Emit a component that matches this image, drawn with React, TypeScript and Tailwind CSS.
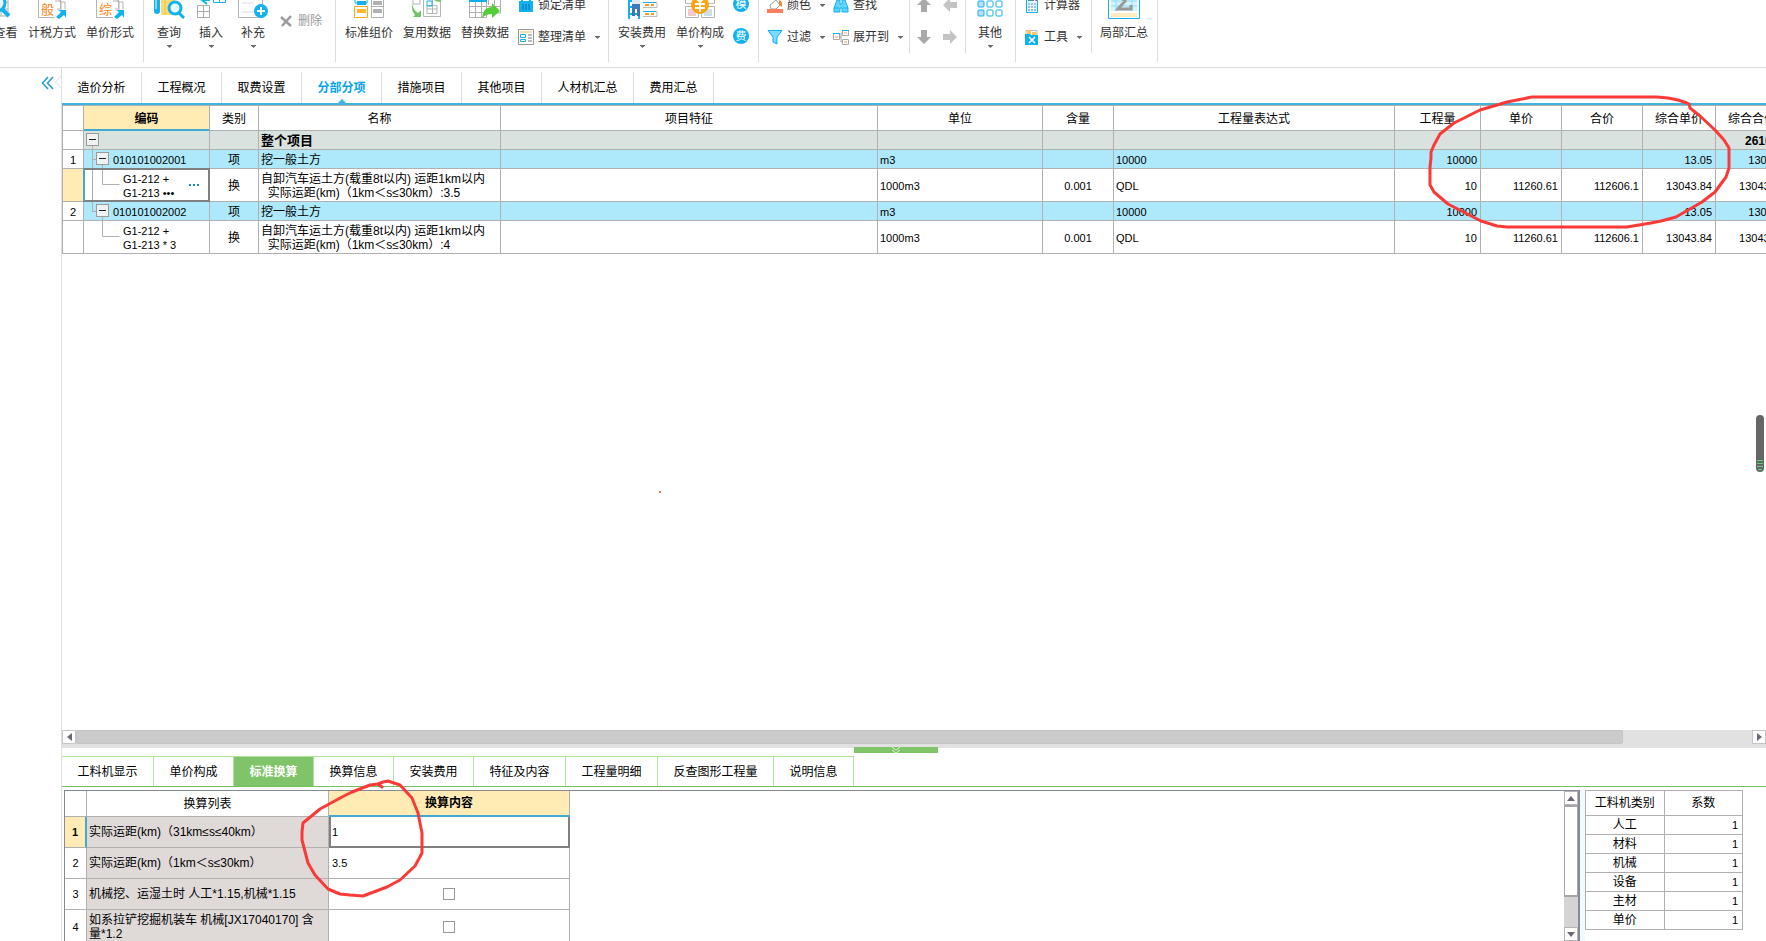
import type { ReactNode } from "react";

const BLUE = "#12b1ef";

function Caret() {
  return (
    <svg width="5" height="3" viewBox="0 0 5 3" className="shrink-0" aria-hidden="true">
      <path d="M0 0h5v.500L2.500 3 0 .500z" fill="#666a73" />
    </svg>
  );
}

function Big({ label, icon, caret, width = "w-[58px]" }: { label: string; icon: ReactNode; caret?: boolean; width?: string }) {
  return (
    <button type="button" className={`flex shrink-0 flex-col items-center whitespace-nowrap ${width}`}>
      <span className="-mt-[13px] block h-8 w-8">
        <svg width="32" height="32" viewBox="0 0 32 32" fill="none" aria-hidden="true">
          {icon}
        </svg>
      </span>
      <span className="mt-1 block h-5 leading-5">{label}</span>
      {caret && (
        <span className="mt-0.5 flex">
          <Caret />
        </span>
      )}
    </button>
  );
}

function Small({ label, icon, caret }: { label: string; icon: ReactNode; caret?: boolean }) {
  return (
    <button type="button" className="flex h-5 items-center gap-1 whitespace-nowrap leading-5">
      <svg width="16" height="16" viewBox="0 0 16 16" fill="none" className="shrink-0" aria-hidden="true">
        {icon}
      </svg>
      <span>{label}</span>
      {caret && (
        <span className="ml-[5px]">
          <Caret />
        </span>
      )}
    </button>
  );
}

const sheet = (ch: string) => (
  <>
    <path d="M2.500 6V30.500H19M2 6H24.500V22" stroke="#b5b5b5" />
    <path d="M19 14h6v10M24 9v6h5V22M21 22h3" stroke="#b5b5b5" />
    <text x="5" y="27" fontSize="13" fill="#ff7f0e">{ch}</text>
    <path d="M20 30l5-5-3-2h8v8l-2-3-5 4z" fill={BLUE} />
  </>
);

const icons = {
  view: (
    <>
      <path d="M4 8h14v21H4M4 15h14M4 22h14M11 8v21" stroke="#b0b0b0" />
      <circle cx="7" cy="16" r="8" fill="#e9f9ff" stroke={BLUE} strokeWidth="3" />
      <path d="M12 22l7 7" stroke={BLUE} strokeWidth="4" />
    </>
  ),
  query: (
    <>
      <path d="M1 4h6v20q0 3-3 3t-3-3z" fill={BLUE} />
      <path d="M3 6v16" stroke="#fff" />
      <path d="M8 5h14v23H8z" fill="#ffdb73" />
      <path d="M12 5v23" stroke="#f5be38" />
      <circle cx="22" cy="21" r="6" fill="#e9f9ff" stroke={BLUE} strokeWidth="3" />
      <path d="M26 26l5 5" stroke={BLUE} strokeWidth="3" />
    </>
  ),
  insert: (
    <>
      <path d="M2.500 18.500h12v12h-12zM2.500 24.500h12M8.500 18.500v12" stroke="#aaa" />
      <path d="M18.500 4.500h12v11h-12zM18.500 10.500h12M24.500 4.500v11" stroke={BLUE} />
      <path d="M15 13H8m4-4-5 4 5 4" stroke={BLUE} strokeWidth="2" />
    </>
  ),
  supplement: (
    <>
      <path d="M1.500 5.500h24v25h-24z" stroke="#b5b5b5" />
      <path d="M5 16h12M5 25h12" stroke="#ddd" />
      <circle cx="24" cy="24" r="7" fill={BLUE} />
      <path d="M20 24h8M24 20v8" stroke="#fff" strokeWidth="2" />
    </>
  ),
  compose: (
    <>
      <path d="M2 6h12v10H2z" stroke={BLUE} />
      <path d="M4 14h9v4H4z" fill={BLUE} />
      <path d="M1.500 19.500h13v11h-13z" stroke="#ffa91f" />
      <path d="M4 22h9v4H4z" fill="#ffb92e" />
      <path d="M18.500 6.500h12v24h-12zM18 19.500h13" stroke="#b0b0b0" />
      <path d="M20 14h9v4h-9zM20 22h9v4h-9z" fill="#b0b0b0" />
    </>
  ),
  reuse: (
    <>
      <path d="M12.500 12.500h17v17h-17zM16 18.500h10v8H16zM21.500 13v13M16 22h10" stroke="#b5b5b5" />
      <path d="M2 10h7v7H2zM16 8h14v6" stroke="#b5b5b5" />
      <path d="M16 14h5v5h-5z" stroke={BLUE} />
      <path d="M1 16q1 7 6 10l3-3v7H2l2-2q-4-5-3-12z" fill="#72c268" />
      <path d="M23 14l6-3 1 4z" fill="#72c268" />
    </>
  ),
  replace: (
    <>
      <path d="M.500 8.500h17v22H.500zM.500 19.500h31M.500 25.500h14M6.500 14v16M12.500 14v16M19.500 8v10M25.500 8v10M31.500 8v18h-6" stroke="#b0b0b0" />
      <path d="M0 14h18" stroke={BLUE} strokeWidth="2" />
      <path d="M13 31q1-11 10-11v-4l8 8-8 7v-4q-6 0-10 4z" fill="#54ce38" />
    </>
  ),
  install: (
    <>
      <path d="M3 6v26M13 6v26M3 14h10M3 20h10M3 27h10" stroke={BLUE} strokeWidth="2" />
      <path d="M6 16h8v13h-3v-7h-2v7H6z" fill="#3d78bd" />
      <path d="M6 12h8v5H6z" fill="#dfe9ee" />
      <path d="M17 15.500h14v5H17M17 24.500h14v5H17" stroke="#bcbcbc" />
      <path d="M17 15.500h13M17 24.500h13" stroke={BLUE} />
      <path d="M19 18h9M19 27h9" stroke="#ff9b25" strokeWidth="2" strokeDasharray="4 2" />
    </>
  ),
  price: (
    <>
      <path d="M1.500 5.500h13v11h-13zM17.500 5.500h13v11h-13zM1.500 19.500h13v11h-13zM17.500 19.500h13v11h-13z" stroke="#b5b5b5" />
      <path d="M4 22h8v7H4z" fill="#f0c9ce" />
      <path d="M20 22h8v7h-8z" fill="#c9e1ed" />
      <circle cx="16" cy="18" r="9" fill="#ffa30f" />
      <path d="M12 11l4 4 4-4M11 17h10M11 21h10M16 15v10" stroke="#fff" strokeWidth="2" />
    </>
  ),
  other: (
    <>
      {[5, 14, 23].map((y) =>
        [4, 13, 22].map((x) => (
          <rect key={`${x}-${y}`} x={x} y={y} width="6" height="6" rx="1" stroke={BLUE} fill={x === 4 ? "#bcdff5" : "#fff"} />
        )),
      )}
    </>
  ),
  sum: (
    <>
      <path d="M.500.500h31v31H.500z" stroke={BLUE} fill="#fff" />
      <path d="M3 3h26v21H3z" fill="#d3f3fd" />
      <path d="M3 14h26M3 19h26M8 3v21M24 3v21" stroke="#8fdcf3" />
      <path d="M3 26h26v4H3z" fill="#ffecc3" />
      <path d="M22 10V7H10l7 7-7 8h13v-4" stroke="#999" strokeWidth="3" />
    </>
  ),
  lock: (
    <>
      <path d="M4 5V1h8v4" stroke={BLUE} strokeWidth="2" />
      <path d="M1 4h14v11H1z" fill={BLUE} />
      <path d="M4 8h8M4 10h8M4 12h8" stroke="#0870b2" strokeDasharray="2 1" />
    </>
  ),
  tidy: (
    <>
      <path d="M.500.500h15v15H.500z" stroke="#999" />
      <path d="M2 2h12v2H2z" fill="#f5dfae" />
      <path d="M2.500 5.500h5v3h-5zM2.500 10.500h5v2h-5z" stroke={BLUE} />
      <path d="M10 6h4M10 9h4M10 12h4" stroke="#bbb" strokeWidth="2" />
    </>
  ),
  color: (
    <>
      <path d="M3 8l6-5 4 5-4 4H4z" fill="#fff" stroke="#999" />
      <path d="M12 3q4 1 3 7l-3-2z" fill="#ef8a35" />
      <path d="M0 12h16v4H0z" fill="#fa7d5c" />
    </>
  ),
  filter: <path d="M1 1.500h14L10 8v7l-4-2V8z" fill="#7adcff" stroke={BLUE} />,
  find: (
    <>
      <path d="M4 3h3v4h2V3h3l3 8v4H9v-4H7v4H1v-4z" fill="#5fd6ff" stroke={BLUE} />
      <path d="M1 11h5M10 11h5" stroke={BLUE} />
    </>
  ),
  expand: (
    <>
      <path d="M.500 4.500h6v6h-6zM9.500 1.500h6v5h-6zM9.500 10.500h6v5h-6zM6 8h2V4h1M8 8v5h1" stroke="#a8a8a8" />
      <path d="M0 4.500h7M9 1.500h7" stroke={BLUE} />
      <path d="M2 8h3M11 4h3M11 13h3" stroke="#e7a35a" />
    </>
  ),
  calc: (
    <>
      <path d="M2.500.500h11v15h-11z" stroke={BLUE} fill="#e8f9ff" />
      <path d="M4 3h6" stroke="#438dc5" strokeWidth="2" />
      <path d="M11 3h2" stroke="#f15a49" strokeWidth="2" />
      <path d="M4 7h8M4 10h8M4 13h8" stroke="#4889c6" strokeDasharray="2 1" strokeWidth="1" />
    </>
  ),
  tool: (
    <>
      <path d="M2 1.500h11v6H2z" fill="#fff" stroke="#b9b9b9" />
      <path d="M3 1h4v5H3zM8 3h4v3H8z" fill="#ffc75b" />
      <path d="M1 5h5l1 1h7v10H1z" fill={BLUE} />
      <path d="M5 8l6 6M11 8l-6 6" stroke="#fff" strokeWidth="1.500" />
    </>
  ),
};

const arrowPath = "M7 0l7 7H10v7H4V7H0z";
function Arrow({ label, turn, tone }: { label: string; turn: number; tone: string }) {
  return (
    <button type="button" aria-label={label} className="flex h-5 w-5 items-center justify-center">
      <svg width="16" height="16" viewBox="-1 -1 16 16" aria-hidden="true">
        <path d={arrowPath} fill={tone} transform={`rotate(${turn} 7 7)`} />
      </svg>
    </button>
  );
}

function Badge({ ch }: { ch: string }) {
  return (
    <button type="button" className="flex h-4 w-4 items-center justify-center rounded-full bg-[#12b1ef] text-[11px] leading-4 text-white">
      {ch}
    </button>
  );
}

function Toolbar() {
  const group = "flex h-[62px] shrink-0 items-start border-r border-[#dcdcdc]";
  const short = "flex h-[53px] shrink-0 items-start border-r border-[#dcdcdc]";
  const stack = "flex flex-col gap-3 -mt-[5px]";
  return (
    <header className="flex h-[68px] shrink-0 overflow-hidden border-b border-[#dcdcdc] text-[#333]">
      <div className={`${group} w-36`}>
        <div className="-ml-3 flex">
          <Big label="查看" icon={icons.view} width="w-[35px]" />
          <Big label="计税方式" icon={sheet("般")} />
          <Big label="单价形式" icon={sheet("综")} />
        </div>
      </div>
      <div className={`${group} w-48 pl-1`}>
        <Big label="查询" icon={icons.query} caret width="w-[42px]" />
        <Big label="插入" icon={icons.insert} caret width="w-[42px]" />
        <Big label="补充" icon={icons.supplement} caret width="w-[42px]" />
        <button type="button" className="mt-[11px] ml-1.5 flex h-5 items-center gap-1.5 whitespace-nowrap text-[#999]">
          <svg width="12" height="12" viewBox="0 0 12 12" aria-hidden="true">
            <path d="M1 2l10 9M11 1L2 11" stroke="#9c9c9c" strokeWidth="2.500" />
          </svg>
          删除
        </button>
      </div>
      <div className={`${group} w-[273px] pl-1`}>
        <Big label="标准组价" icon={icons.compose} />
        <Big label="复用数据" icon={icons.reuse} />
        <Big label="替换数据" icon={icons.replace} />
        <div className={`${stack} ml-1`}>
          <Small label="锁定清单" icon={icons.lock} />
          <Small label="整理清单" icon={icons.tidy} caret />
        </div>
      </div>
      <div className={`${group} w-[150px] pl-1`}>
        <Big label="安装费用" icon={icons.install} caret />
        <Big label="单价构成" icon={icons.price} caret />
        <div className="-mt-1 ml-1 flex flex-col gap-4">
          <Badge ch="模" />
          <Badge ch="费" />
        </div>
      </div>
      <div className={`${short} w-[151px] gap-2 pl-2`}>
        <div className={stack}>
          <Small label="颜色" icon={icons.color} caret />
          <Small label="过滤" icon={icons.filter} caret />
        </div>
        <div className={stack}>
          <Small label="查找" icon={icons.find} />
          <Small label="展开到" icon={icons.expand} caret />
        </div>
      </div>
      <div className={`${short} w-14 pl-1`}>
        <div className="-mt-[5px] grid grid-cols-2 gap-x-1.5 gap-y-3">
          <Arrow label="上移" turn={0} tone="#a9a9a9" />
          <Arrow label="左移" turn={-90} tone="#c4c4c4" />
          <Arrow label="下移" turn={180} tone="#a9a9a9" />
          <Arrow label="右移" turn={90} tone="#c4c4c4" />
        </div>
      </div>
      <div className={`${group} w-[50px] pl-[3px]`}>
        <Big label="其他" icon={icons.other} caret width="w-[42px]" />
      </div>
      <div className={`${short} w-[76px] pl-2`}>
        <div className={stack}>
          <Small label="计算器" icon={icons.calc} />
          <Small label="工具" icon={icons.tool} caret />
        </div>
      </div>
      <div className={`${group} w-[66px] pl-[3px]`}>
        <Big label="局部汇总" icon={icons.sum} />
      </div>
    </header>
  );
}

const topTabs = ["造价分析", "工程概况", "取费设置", "分部分项", "措施项目", "其他项目", "人材机汇总", "费用汇总"];

function TopTabs() {
  return (
    <nav className="flex h-[37px] shrink-0 border-b-2 border-[#42b4e0] pt-1">
      {topTabs.map((t) => {
        const on = t === "分部分项";
        return (
          <button
            key={t}
            type="button"
            className={`relative border-r border-[#dcdcdc] whitespace-nowrap ${t.length > 4 ? "w-[92px]" : "w-20"} ${on ? "font-bold text-[#05a4ec]" : "text-black"}`}
          >
            {t}
            {on && (
              <svg width="8" height="4" viewBox="0 0 8 4" className="absolute bottom-0 left-9" aria-hidden="true">
                <path d="M4 0l4 4H0z" fill="#42b4e0" />
              </svg>
            )}
          </button>
        );
      })}
    </nav>
  );
}

type Row = {
  kind: "item" | "sub";
  no: string;
  code: string[];
  type: string;
  name: string[];
  unit: string;
  ratio: string;
  expr: string;
  qty: string;
  price: string;
  total: string;
  full: string;
  sum: string;
  selected?: boolean;
};

const rows: Row[] = [
  { kind: "item", no: "1", code: ["010101002001"], type: "项", name: ["挖一般土方"], unit: "m3", ratio: "", expr: "10000", qty: "10000", price: "", total: "", full: "13.05", sum: "130500" },
  { kind: "sub", no: "", code: ["G1-212 +", "G1-213 •••"], type: "换", name: ["自卸汽车运土方(载重8t以内) 运距1km以内", "\u00a0\u00a0实际运距(km)（1km＜s≤30km）:3.5"], unit: "1000m3", ratio: "0.001", expr: "QDL", qty: "10", price: "11260.61", total: "112606.1", full: "13043.84", sum: "130438.4", selected: true },
  { kind: "item", no: "2", code: ["010101002002"], type: "项", name: ["挖一般土方"], unit: "m3", ratio: "", expr: "10000", qty: "10000", price: "", total: "", full: "13.05", sum: "130500" },
  { kind: "sub", no: "", code: ["G1-212 +", "G1-213 * 3"], type: "换", name: ["自卸汽车运土方(载重8t以内) 运距1km以内", "\u00a0\u00a0实际运距(km)（1km＜s≤30km）:4"], unit: "1000m3", ratio: "0.001", expr: "QDL", qty: "10", price: "11260.61", total: "112606.1", full: "13043.84", sum: "130438.4" },
];

function ToggleBox({ x, y }: { x: number; y: number }) {
  return (
    <>
      <rect x={x + 0.5} y={y + 0.5} width="12" height="12" fill="#f0f2f2" stroke="#9a9a9a" />
      <path d={`M${x + 3} ${y + 6.5}h7`} stroke="#222" />
    </>
  );
}

function MainGrid() {
  const edge = "border-r border-b border-[#b0b0b0] whitespace-nowrap";
  const cell = `${edge} px-0 pt-0.5 pb-0 font-normal`;
  const left = `${edge} pt-0.5 pr-0 pb-0 pl-0.5 font-normal`;
  const num = `${edge} pt-0.5 pr-[3px] pb-0 pl-0 text-right text-[11px]`;
  const heads = ["名称", "项目特征", "单位", "含量", "工程量表达式", "工程量", "单价", "合价", "综合单价", "综合合价"];
  return (
    <div className="min-h-0 flex-1 overflow-hidden">
      <table className="w-[1727px] table-fixed border-separate border-spacing-0 border-t border-l border-[#b0b0b0] leading-[14px] text-black">
        <colgroup>
          <col className="w-[21px]" />
          <col className="w-[126px]" />
          <col className="w-[49px]" />
          <col className="w-[242px]" />
          <col className="w-[377px]" />
          <col className="w-[165px]" />
          <col className="w-[71px]" />
          <col className="w-[281px]" />
          <col className="w-[86px]" />
          <col className="w-[81px]" />
          <col className="w-[81px]" />
          <col className="w-[73px]" />
          <col className="w-[73px]" />
        </colgroup>
        <thead>
          <tr className="h-[25px]">
            <th className={cell} />
            <th className="border-r border-b-2 border-r-[#b0b0b0] border-b-[#42a9d2] bg-[#ffebb3] px-0 pt-0.5 pb-0 font-bold">编码</th>
            <th className={cell}>类别</th>
            {heads.map((h) => (
              <th key={h} className={cell}>{h}</th>
            ))}
          </tr>
        </thead>
        <tbody>
          <tr className="h-[19px] bg-[#d9e2de]">
            <td className={`${edge} bg-white p-0`} />
            <td className={`${edge} p-0`}>
              <svg width="20" height="18" className="block" aria-hidden="true">
                <path d="M8.500 15v3" stroke="#b0b0b0" />
                <ToggleBox x={2} y={2} />
              </svg>
            </td>
            <td className={cell} />
            <td className={`${edge} pt-0.5 pr-0 pb-0 pl-0.5 text-[13px] font-bold`}>整个项目</td>
            {["a", "b", "c", "d", "e", "f", "g", "h"].map((k) => (
              <td key={k} className={cell} />
            ))}
            <td className={`${edge} pt-0.5 pr-[3px] pb-0 pl-0 text-right text-xs font-bold`}>261000</td>
          </tr>
          {rows.map((r, i) => {
            const item = r.kind === "item";
            return (
              <tr key={i} className={item ? "h-[19px] bg-[#ade8fb]" : "h-[33px]"}>
                <td className={`${cell} text-center text-[11px] ${r.selected ? "bg-[#ffebb3]" : "bg-white"}`}>{r.no}</td>
                <td className={`${edge} relative p-0 text-[11px]`}>
                  <div className="flex items-center">
                    {item ? (
                      <svg width="29" height="18" className="block shrink-0" aria-hidden="true">
                        <path d={i === 0 ? "M8.500 0v18M8 9.500h5M18.500 15v3" : "M8.500 0v9.500h5M18.500 15v3"} stroke="#b0b0b0" fill="none" />
                        <ToggleBox x={12} y={2} />
                      </svg>
                    ) : (
                      <svg width="39" height="32" className="block shrink-0" aria-hidden="true">
                        <path d={i === 1 ? "M8.500 0v32M18.500 0v15.500h17" : "M18.500 0v15.500h17"} stroke="#b0b0b0" fill="none" />
                      </svg>
                    )}
                    <div className="pt-0.5">
                      {r.code.map((c) => (
                        <div key={c}>{c}</div>
                      ))}
                    </div>
                    {r.selected && (
                      <button type="button" className="mr-2.5 ml-auto flex gap-0.5" aria-label="更多">
                        <span className="h-0.5 w-0.5 bg-[#2180cf]" />
                        <span className="h-0.5 w-0.5 bg-[#2180cf]" />
                        <span className="h-0.5 w-0.5 bg-[#2180cf]" />
                      </button>
                    )}
                  </div>
                  {r.selected && <div className="pointer-events-none absolute -inset-px border-2 border-[#808080] border-l-[#42a9d2]" />}
                </td>
                <td className={`${cell} text-center`}>{r.type}</td>
                <td className={left}>
                  {r.name.map((n) => (
                    <div key={n}>{n}</div>
                  ))}
                </td>
                <td className={cell} />
                <td className={`${left} text-[11px]`}>{r.unit}</td>
                <td className={`${cell} text-center text-[11px]`}>{r.ratio}</td>
                <td className={`${left} text-[11px]`}>{r.expr}</td>
                <td className={num}>{r.qty}</td>
                <td className={num}>{r.price}</td>
                <td className={num}>{r.total}</td>
                <td className={num}>{r.full}</td>
                <td className={num}>{r.sum}</td>
              </tr>
            );
          })}
        </tbody>
      </table>
    </div>
  );
}

function HScroll() {
  return (
    <div className="flex h-[18px] shrink-0 items-start bg-[#e1e1e1]">
      <button type="button" aria-label="向左滚动" className="flex h-3.5 w-3.5 items-center justify-center border border-[#c6c6c6] bg-white">
        <svg width="5" height="8" aria-hidden="true">
          <path d="M5 0v8L0 4z" fill="#666a76" />
        </svg>
      </button>
      <div className="flex h-3.5 flex-1">
        <div className="h-3.5 w-[92.3%] rounded-xs border border-[#c4c4c4] bg-[#cbcbcb]" />
      </div>
      <button type="button" aria-label="向右滚动" className="flex h-3.5 w-3.5 items-center justify-center border border-[#c6c6c6] bg-white">
        <svg width="5" height="8" aria-hidden="true">
          <path d="M0 0v8l5-4z" fill="#666a76" />
        </svg>
      </button>
    </div>
  );
}

const bottomTabs: [string, string][] = [
  ["工料机显示", "w-[92px]"],
  ["单价构成", "w-20"],
  ["标准换算", "w-20"],
  ["换算信息", "w-20"],
  ["安装费用", "w-20"],
  ["特征及内容", "w-[92px]"],
  ["工程量明细", "w-[92px]"],
  ["反查图形工程量", "w-[116px]"],
  ["说明信息", "w-20"],
];

const factors = ["人工", "材料", "机械", "设备", "主材", "单价"];

function BottomPanel() {
  const c = "border-r border-b border-[#b0b0b0] p-0 font-normal";
  const label = `${c} bg-[#dfdad8] pl-0.5 text-left`;
  return (
    <section className="relative flex h-[193px] shrink-0 flex-col pt-2">
      <button type="button" aria-label="收起面板" className="absolute -top-px left-[792px] flex h-1.5 w-[84px] justify-center bg-[#80c469]">
        <svg width="10" height="6" fill="none" aria-hidden="true">
          <path d="M1 0l4 3 4-3M1 3l4 3 4-3" stroke="#d8f2d0" />
        </svg>
      </button>
      <nav className="flex h-[31px] shrink-0 border-b border-[#76c162]">
        {bottomTabs.map(([t, w]) => (
          <button
            key={t}
            type="button"
            className={`border-t border-r border-[#b3e49f] whitespace-nowrap ${w} ${t === "标准换算" ? "bg-[#80c469] font-bold text-white" : "text-black"}`}
          >
            {t}
          </button>
        ))}
      </nav>
      <div className="mt-[3px] flex min-h-0 flex-1 pl-0.5">
        <div className="flex min-w-0 flex-1 overflow-hidden border-t border-r-2 border-l border-[#868a94]">
          <div className="min-w-0 flex-1">
            <table className="w-[505px] table-fixed border-separate border-spacing-0 leading-[14px] text-black">
              <colgroup>
                <col className="w-[22px]" />
                <col className="w-[242px]" />
                <col className="w-[241px]" />
              </colgroup>
              <thead>
                <tr className="h-[26px]">
                  <th className={c} />
                  <th className={c}>换算列表</th>
                  <th className="border-r border-b-2 border-r-[#b0b0b0] border-b-[#42a9d2] bg-[#ffebb3] p-0 font-bold">换算内容</th>
                </tr>
              </thead>
              <tbody>
                <tr className="h-[31px]">
                  <td className="border-r-2 border-b border-r-[#42a9d2] border-b-[#b0b0b0] bg-[#ffebb3] p-0 text-center text-[11px] font-bold">1</td>
                  <th id="r1" className={label}>实际运距(km)（31km≤s≤40km）</th>
                  <td className="border-2 border-t-0 border-[#808080] p-0">
                    <input aria-labelledby="r1" defaultValue="1" className="block w-full px-px text-[11px] outline-none" />
                  </td>
                </tr>
                <tr className="h-[31px]">
                  <td className={`${c} text-center text-[11px]`}>2</td>
                  <th id="r2" className={label}>实际运距(km)（1km＜s≤30km）</th>
                  <td className={c}>
                    <input aria-labelledby="r2" defaultValue="3.5" className="block w-full px-[3px] text-[11px] outline-none" />
                  </td>
                </tr>
                <tr className="h-[31px]">
                  <td className={`${c} text-center text-[11px]`}>3</td>
                  <th id="r3" className={label}>机械挖、运湿土时 人工*1.15,机械*1.15</th>
                  <td className={c}>
                    <input type="checkbox" aria-labelledby="r3" className="mx-auto block h-3 w-3 appearance-none border border-[#999] bg-white" />
                  </td>
                </tr>
                <tr className="h-[34px]">
                  <td className={`${c} text-center text-[11px]`}>4</td>
                  <th id="r4" className={label}>
                    <div>如系拉铲挖掘机装车 机械[JX17040170] 含</div>
                    <div>量*1.2</div>
                  </th>
                  <td className={c}>
                    <input type="checkbox" aria-labelledby="r4" className="mx-auto block h-3 w-3 appearance-none border border-[#999] bg-white" />
                  </td>
                </tr>
              </tbody>
            </table>
          </div>
          <div className="flex w-3.5 shrink-0 flex-col bg-[#d4d4d4]">
            <button type="button" aria-label="向上滚动" className="flex h-3.5 shrink-0 items-center justify-center border border-[#b5b5b5] bg-white">
              <svg width="8" height="5" aria-hidden="true">
                <path d="M0 5h8L4 0z" fill="#666a76" />
              </svg>
            </button>
            <div className="h-[92px] shrink-0 border border-y-2 border-[#a6a6a6] bg-white" />
            <button type="button" aria-label="向下滚动" className="mt-auto flex h-3.5 shrink-0 items-center justify-center border border-[#b5b5b5] bg-white">
              <svg width="8" height="5" aria-hidden="true">
                <path d="M0 0h8L4 5z" fill="#666a76" />
              </svg>
            </button>
          </div>
        </div>
        <div className="w-[186px] shrink-0">
          <div className="h-full w-fit border-l-[5px] border-[#effcff]">
            <table className="w-[158px] table-fixed border-separate border-spacing-0 border-t border-l border-[#b0b0b0] leading-[14px] text-black">
              <thead>
                <tr className="h-[25px]">
                  <th className={c}>工料机类别</th>
                  <th className={c}>系数</th>
                </tr>
              </thead>
              <tbody>
                {factors.map((f) => (
                  <tr key={f} className="h-[19px]">
                    <td className={`${c} text-center`}>{f}</td>
                    <td className={`${c} pr-1 text-right text-[11px]`}>1</td>
                  </tr>
                ))}
              </tbody>
            </table>
          </div>
        </div>
      </div>
    </section>
  );
}

export default function App() {
  return (
    <div className="relative flex h-screen flex-col overflow-hidden bg-white font-['Liberation_Sans','Noto_Sans_CJK_SC',sans-serif] text-xs">
      <Toolbar />
      <div className="flex min-h-0 flex-1">
        <aside className="w-[62px] shrink-0 border-r border-[#e0e0e0] pt-[7px]">
          <button type="button" aria-label="收起导航" className="ml-[41px] flex">
            <svg width="21" height="16" fill="none" aria-hidden="true">
              <path d="M7 2L1.500 8 7 14M12 2L6.500 8 12 14" stroke="#1ea0cc" strokeWidth="1.500" />
              <path d="M20.500 1l-6 6 6 6" stroke="#dcdcdc" />
            </svg>
          </button>
        </aside>
        <main className="flex min-w-0 flex-1 flex-col">
          <TopTabs />
          <MainGrid />
          <HScroll />
          <BottomPanel />
        </main>
      </div>
      <svg width="1766" height="941" viewBox="0 0 1766 941" fill="none" className="pointer-events-none absolute top-0 left-0" aria-hidden="true">
        <g stroke="#fa3a37" strokeWidth="3" strokeLinejoin="round" strokeLinecap="round">
          <path d="M1689 104L1687 103 1678 100 1668 98 1657 97H1532L1507 102 1480 110 1454 123 1440 134 1434 145 1431 152V158L1430 167V185L1434 192 1448 204 1481 221 1497 226 1507 227H1627L1651 223 1661 221 1676 217 1702 202 1715 192 1726 177 1729 168V148L1724 140 1715 130 1700 116 1690 108z" />
          <path d="M382 787L378 784 370 785 352 792 342 797 320 809 303 823 302 832V840L308 863 315 875 328 889 340 894 350 895 363 896 387 887 400 880 415 866 422 853V833L418 813 412 798 400 785 388 781 383 782 378 784" />
        </g>
        <circle cx="660" cy="492" r="1" fill="#fa3a37" />
      </svg>
      <div className="absolute top-[415px] right-0.5 flex h-[57px] w-2 flex-col items-center justify-end gap-0.5 rounded-full bg-[#666] pb-0.5">
        <span className="h-px w-1.5 bg-[#5fd07a]" />
        <span className="h-px w-1.5 bg-[#5fd07a]" />
        <span className="h-px w-1.5 bg-[#5fd07a]" />
        <span className="h-px w-1 bg-[#5fd07a]" />
      </div>
    </div>
  );
}
